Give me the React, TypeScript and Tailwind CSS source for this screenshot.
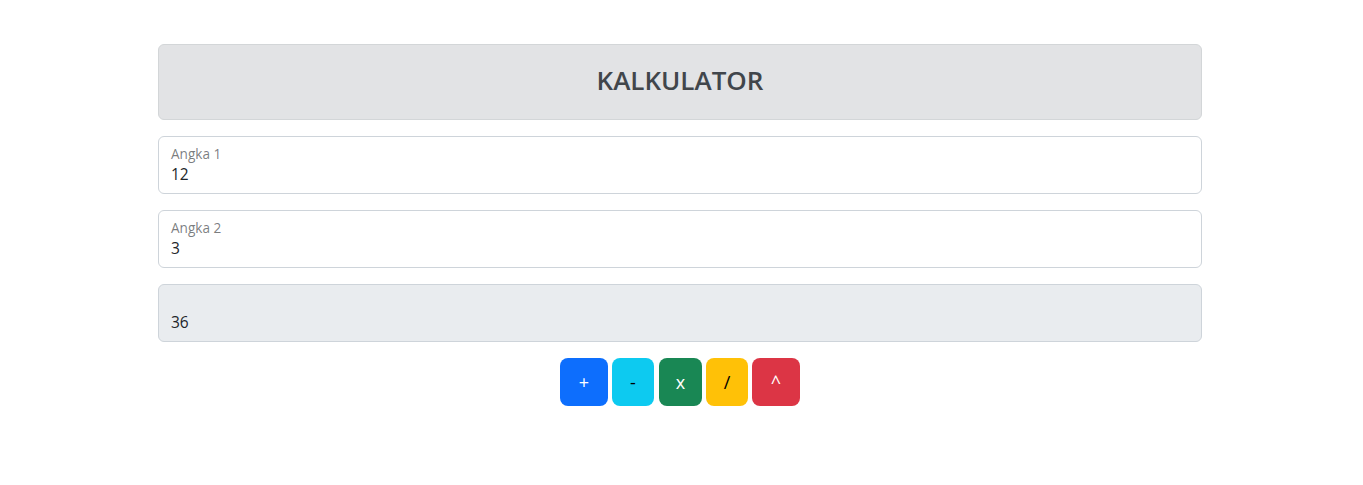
export default function App() {
  const field = (label: string, value: string, disabled = false) => (
    <div
      className={`h-[58px] rounded-[6px] border border-[#ced4da] px-[12px] flex flex-col ${
        disabled ? "bg-[#e9ecef]" : "bg-white"
      }`}
    >
      <div className="h-[25px] pt-[8px] text-[13.6px] leading-[17px] text-[rgba(33,37,41,0.6)]">{label}</div>
      <div className="text-[15.5px] leading-[24px] text-[#212529]">{value}</div>
    </div>
  );
  const btns: { t: string; cls: string }[] = [
    { t: "+", cls: "w-[48px] bg-[#0d6efd] text-white mr-[4px]" },
    { t: "-", cls: "w-[42px] bg-[#0dcaf0] text-black mr-[5px]" },
    { t: "x", cls: "w-[43px] bg-[#198754] text-white mr-[4px]" },
    { t: "/", cls: "w-[42px] bg-[#ffc107] text-black mr-[4px]" },
    { t: "^", cls: "w-[48px] bg-[#dc3545] text-white" },
  ];
  return (
    <div className="min-h-[485px] bg-white font-['Open_Sans',sans-serif]">
      <div className="w-[1044px] ml-[158px] pt-[44px] flex flex-col gap-[16px]">
        <div className="h-[76px] rounded-[6px] border border-[#d3d6d8] bg-[#e2e3e5] flex items-center justify-center pb-[5px]">
          <h1 className="text-[26px] font-semibold text-[#41464b] leading-none">KALKULATOR</h1>
        </div>
        {field("Angka 1", "12")}
        {field("Angka 2", "3")}
        {field("", "36", true)}
        <div className="flex justify-center">
          {btns.map((b) => (
            <button
              key={b.t}
              className={`h-[48px] rounded-[8px] text-[18px] font-medium leading-none flex items-center justify-center ${b.cls}`}
            >
              {b.t}
            </button>
          ))}
        </div>
      </div>
    </div>
  );
}
